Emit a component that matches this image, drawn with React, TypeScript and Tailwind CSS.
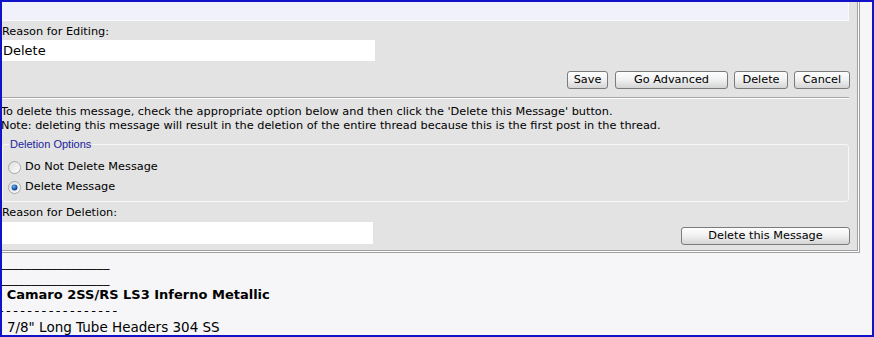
import React from "react";

function Radio({ checked }: { checked?: boolean }) {
  return (
    <svg width="13" height="13" viewBox="0 0 13 13" className="shrink-0">
      <defs>
        <linearGradient id={checked ? "rg1" : "rg0"} x1="0" y1="0" x2="1" y2="1">
          <stop offset="0" stopColor="#dcdcd6" />
          <stop offset="1" stopColor="#ffffff" />
        </linearGradient>
        <radialGradient id="dot" cx="0.4" cy="0.35" r="0.7">
          <stop offset="0" stopColor="#6fb0f0" />
          <stop offset="0.6" stopColor="#1d5fb0" />
          <stop offset="1" stopColor="#0d3a78" />
        </radialGradient>
      </defs>
      <circle cx="6.5" cy="6.5" r="6" fill={`url(#${checked ? "rg1" : "rg0"})`} stroke="#a4a8b0" strokeWidth="1" />
      {checked && <circle cx="6.5" cy="6.5" r="3" fill="url(#dot)" />}
    </svg>
  );
}

function Btn({ w, children }: { w: string; children: React.ReactNode }) {
  return (
    <div
      className={`${w} h-[18px] flex items-center justify-center rounded-[3px] border border-[#7b7b7b] bg-linear-to-b from-[#fefefe] via-[#f0f0f0] to-[#d4d4d4] text-[11.3px] leading-[14px] text-black`}
    >
      {children}
    </div>
  );
}

export default function App() {
  return (
    <div className="w-[874px] h-[337px] border-2 border-[#1212c8] bg-[#f6f6f8] overflow-hidden font-['DejaVu_Sans',Verdana,sans-serif] text-black">
      <div className="w-[858px] border-r border-b border-[#a0a0a0]">
        <div className="border-r border-b border-white">
          <div className="bg-[#e3e3e3] border-r border-b border-[#a0a0a0] pr-[7px] pb-[5px]">
            <div className="h-[19px] w-[847px] bg-[#f1f1fb] border-b border-r border-[#f9f9fd]" />
            <div className="mt-[4px] text-[11.3px] leading-[14px]">Reason for Editing:</div>
            <div className="mt-[1px] h-[21px] w-[373px] bg-white text-[13px] leading-[21px] pl-[1px]">Delete</div>
            <div className="mt-[10px] flex justify-end">
              <Btn w="w-[41px]">Save</Btn>
              <div className="ml-[7px]">
                <Btn w="w-[113px]">Go Advanced</Btn>
              </div>
              <div className="ml-[6px]">
                <Btn w="w-[54px]">Delete</Btn>
              </div>
              <div className="ml-[6px]">
                <Btn w="w-[56px]">Cancel</Btn>
              </div>
            </div>
            <div className="mt-[8px] w-[847px] border-t border-b border-t-[#a6a6a6] border-b-white" />
            <div className="mt-[6px] text-[11.3px] leading-[14px] -ml-[1px] whitespace-nowrap">
              <div>To delete this message, check the appropriate option below and then click the 'Delete this Message' button.</div>
              <div>Note: deleting this message will result in the deletion of the entire thread because this is the first post in the thread.</div>
            </div>
            <fieldset className="mt-[5px] w-[847px] border border-[#f7f7f7] rounded-[3px] pl-[6px] pt-[8px] pb-[6px]">
              <legend className="px-[1px] text-[11px] leading-[13px] text-[#22229c] font-['Liberation_Sans',Arial,sans-serif]">
                Deletion Options
              </legend>
              <div className="-ml-[1px] flex flex-col gap-[4px] text-[11.3px]">
                <label className="h-[16px] flex items-center gap-[4px]">
                  <Radio />
                  <span>Do Not Delete Message</span>
                </label>
                <label className="h-[16px] flex items-center gap-[4px]">
                  <Radio checked />
                  <span>Delete Message</span>
                </label>
              </div>
            </fieldset>
            <div className="mt-[4px] text-[11.3px] leading-[14px]">Reason for Deletion:</div>
            <div className="mt-[2px] flex items-start justify-between">
              <div className="h-[22px] w-[371px] bg-white" />
              <div className="mt-[5px]">
                <Btn w="w-[169px]">Delete this Message</Btn>
              </div>
            </div>
          </div>
        </div>
      </div>
      <div className="mt-[2px] text-[13.5px] leading-[16px] overflow-hidden whitespace-nowrap">
        <div className="-ml-[3px] text-[13px]">_________________</div>
        <div className="-ml-[3px] text-[13px]">_________________</div>
        <div className="-ml-[36px] font-bold text-[13px]">2010 Camaro 2SS/RS LS3 Inferno Metallic</div>
        <div className="-ml-[3px] text-[13px] tracking-[2.4px]">-----------------</div>
        <div className="-ml-[8px]">1 7/8" Long Tube Headers 304 SS</div>
      </div>
    </div>
  );
}
